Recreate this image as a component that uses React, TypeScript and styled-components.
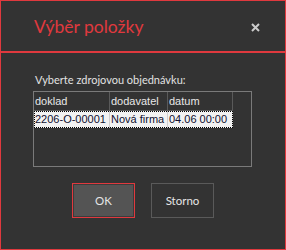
import React from "react";
import styled, { createGlobalStyle } from "styled-components";

const Global = createGlobalStyle`
  html, body { margin: 0; padding: 0; background: #333333; }
  * { box-sizing: border-box; }
`;

const RED = "#e0393e";

const Dialog = styled.div`
  width: 286px;
  height: 250px;
  border: 1px solid ${RED};
  background: #333333;
  display: flex;
  flex-direction: column;
  font-family: Lato, "Noto Sans", sans-serif;
`;

const TitleBar = styled.div`
  height: 52px;
  border-bottom: 2px solid ${RED};
  display: flex;
  align-items: center;
  justify-content: space-between;
  padding: 0 25px 0 33px;
`;

const Title = styled.div`
  color: ${RED};
  font-size: 17.5px;
  line-height: 24px;
  margin-top: 2px;
`;

const CloseIcon = styled.svg`
  display: block;
  margin-top: 2px;
`;

const Body = styled.div`
  display: flex;
  flex-direction: column;
  padding: 19px 33px 0 32px;
`;

const Label = styled.div`
  color: #e2e2e2;
  font-size: 11px;
  line-height: 16px;
  padding-left: 2px;
  margin-bottom: 3px;
`;

const Grid = styled.div`
  height: 76px;
  border: 1px solid #7a7a7a;
  display: flex;
  flex-direction: column;
`;

const Row = styled.div<{ $head?: boolean }>`
  display: grid;
  grid-template-columns: 76px 58px 65px;
  width: 199px;
  height: ${(p) => (p.$head ? "19px" : "17px")};
  background: ${(p) => (p.$head ? "#333333" : "#f2f2f2")};
  outline: ${(p) => (p.$head ? "none" : "1px dotted #000")};
  outline-offset: -1px;
`;

const Cell = styled.div<{ $head?: boolean }>`
  font-family: "Liberation Sans", Arial, sans-serif;
  font-size: 11px;
  line-height: ${(p) => (p.$head ? "18px" : "16px")};
  padding-left: 1px;
  color: ${(p) => (p.$head ? "#e8e8e8" : "#101030")};
  border-right: 1px solid ${(p) => (p.$head ? "#5a5a5a" : "#cfcfcf")};
  border-bottom: ${(p) => (p.$head ? "1px solid #5a5a5a" : "none")};
  white-space: nowrap;
  overflow: hidden;
`;

const Buttons = styled.div`
  display: flex;
  justify-content: center;
  gap: 16px;
  margin-top: 16px;
  padding-left: 1px;
`;

const Button = styled.div<{ $primary?: boolean }>`
  width: 63px;
  height: 35px;
  display: flex;
  align-items: center;
  justify-content: center;
  font-size: 11.5px;
  color: #e6e6e6;
  border: 1px solid ${(p) => (p.$primary ? RED : "#5a5a5a")};
  background: ${(p) => (p.$primary ? "#545454" : "#333333")};
  box-shadow: ${(p) => (p.$primary ? "inset 0 0 0 1px #3c3c3c" : "none")};
`;

export default function App() {
  return (
    <>
      <Global />
      <Dialog>
        <TitleBar>
          <Title>Výběr položky</Title>
          <CloseIcon width="9" height="9" viewBox="0 0 9 9">
            <path d="M1 1L8 8M8 1L1 8" stroke="#cccccc" strokeWidth="2" />
          </CloseIcon>
        </TitleBar>
        <Body>
          <Label>Vyberte zdrojovou objednávku:</Label>
          <Grid>
            <Row $head>
              <Cell $head>doklad</Cell>
              <Cell $head>dodavatel</Cell>
              <Cell $head>datum</Cell>
            </Row>
            <Row>
              <Cell>2206-O-00001</Cell>
              <Cell>Nová firma</Cell>
              <Cell>04.06 00:00</Cell>
            </Row>
          </Grid>
          <Buttons>
            <Button $primary>OK</Button>
            <Button>Storno</Button>
          </Buttons>
        </Body>
      </Dialog>
    </>
  );
}
